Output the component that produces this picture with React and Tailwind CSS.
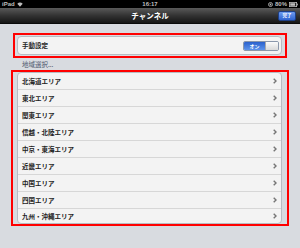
const areas = [
  "北海道エリア",
  "東北エリア",
  "関東エリア",
  "信越・北陸エリア",
  "中京・東海エリア",
  "近畿エリア",
  "中国エリア",
  "四国エリア",
  "九州・沖縄エリア",
];

function Chevron() {
  return (
    <svg width="4" height="6" viewBox="0 0 4 6">
      <path d="M0.7 0.7 L3 3 L0.7 5.3" fill="none" stroke="#767676" strokeWidth="1.4" />
    </svg>
  );
}

function Wifi() {
  return (
    <svg width="6" height="5" viewBox="0 0 6 5">
      <path d="M0.3 1.8 A4 4 0 0 1 5.7 1.8 L3 4.8 Z" fill="#bdbdbd" />
    </svg>
  );
}

function Lock() {
  return (
    <svg width="5" height="5" viewBox="0 0 5 5">
      <circle cx="2.5" cy="2.5" r="2" fill="none" stroke="#bdbdbd" strokeWidth="0.8" />
      <rect x="1.7" y="1.6" width="1.6" height="1.8" fill="#bdbdbd" />
    </svg>
  );
}

function Battery() {
  return (
    <svg width="9" height="5" viewBox="0 0 9 5">
      <rect x="0.4" y="0.4" width="7.2" height="4.2" fill="none" stroke="#bdbdbd" strokeWidth="0.8" />
      <rect x="1.2" y="1.2" width="5" height="2.6" fill="#bdbdbd" />
      <rect x="7.8" y="1.6" width="1" height="1.8" fill="#bdbdbd" />
    </svg>
  );
}

export default function App() {
  return (
    <div className="w-[300px] h-[248px] overflow-hidden bg-[#d8dbe0] font-['Noto_Sans_CJK_JP',sans-serif] flex flex-col">
      {/* status bar */}
      <div className="h-[8px] bg-black grid grid-cols-3 items-center px-[2px] text-[6px] font-bold leading-none text-[#bdbdbd] font-['Liberation_Sans',sans-serif]">
        <div className="flex items-center gap-[2px]">
          <span>iPad</span>
          <Wifi />
        </div>
        <div className="text-center">16:17</div>
        <div className="flex items-center justify-end gap-[2px]">
          <Lock />
          <span>80%</span>
          <Battery />
        </div>
      </div>

      {/* nav bar */}
      <div className="h-[16px] bg-gradient-to-b from-[#5a5a5a] via-[#333333] to-[#161616] border-b border-[#0a0a0a] grid grid-cols-[1fr_auto_1fr] items-center">
        <div />
        <div className="text-white text-[7.5px] font-bold leading-none">チャンネル</div>
        <div className="flex justify-end pr-[4px]">
          <div className="w-[18px] h-[10px] rounded-[2px] border border-[#1d3f86] bg-gradient-to-b from-[#6f9cef] to-[#2f63d0] flex items-center justify-center text-white text-[4.5px] font-bold leading-none">
            完了
          </div>
        </div>
      </div>

      {/* manual setting */}
      <div className="mt-[9px] ml-[13px] w-[274px] h-[25px] border-2 border-[#ff0000] pt-[1px] pb-[1px] pl-[2px] pr-[3px]">
        <div className="h-[19px] rounded-[4px] bg-[#f3f3f3] border border-[#b8bcc2] flex items-center justify-between pl-[4px] pr-[2px]">
          <span className="text-[6.5px] font-bold text-[#1e1e1e] leading-none">手動設定</span>
          <div className="w-[36px] h-[10px] rounded-[2px] border border-[#8a97ab] flex overflow-hidden">
            <div className="w-[21px] bg-gradient-to-b from-[#2a60cc] to-[#5d93ea] flex items-center justify-center text-white text-[5px] font-bold leading-none">
              オン
            </div>
            <div className="flex-1 bg-gradient-to-b from-[#fbfbfb] to-[#d9d9d9] border-l border-[#a9a9a9]" />
          </div>
        </div>
      </div>

      {/* section label */}
      <div className="h-[12px] pl-[22px] flex items-center text-[6.5px] text-[#4c566c] leading-none">
        地域選択...
      </div>

      {/* area list */}
      <div className="ml-[11px] w-[278px] h-[156px] border-2 border-[#ff0000] pl-[4px] pr-[5px]">
        <div className="h-full rounded-[4px] bg-[#f3f3f3] border border-[#b8bcc2] flex flex-col overflow-hidden">
          {areas.map((a, i) => (
            <div
              key={a}
              className={
                i < areas.length - 1
                  ? "h-[17px] shrink-0 border-b border-[#d7d7d7] flex items-center justify-between pl-[4px] pr-[4px]"
                  : "flex-1 flex items-center justify-between pl-[4px] pr-[4px]"
              }
            >
              <span className="text-[6.5px] font-bold text-[#1e1e1e] leading-none">{a}</span>
              <Chevron />
            </div>
          ))}
        </div>
      </div>
    </div>
  );
}
